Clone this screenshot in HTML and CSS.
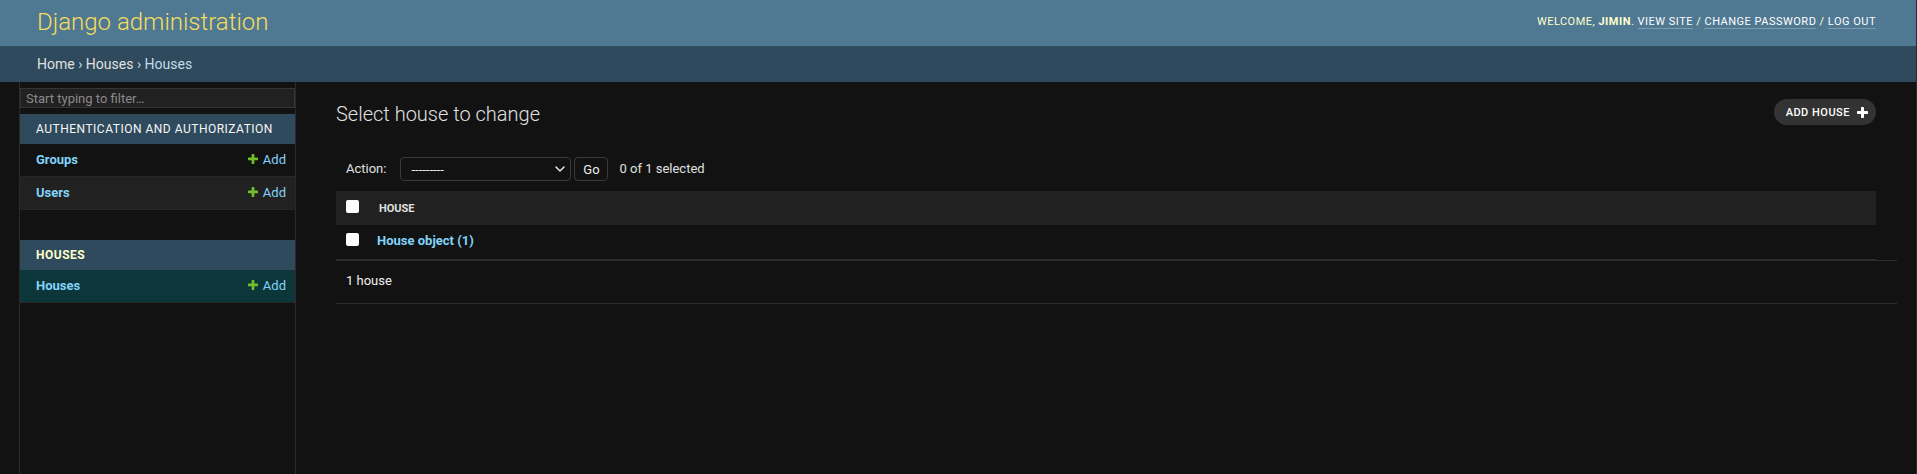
FILE: index.html
```html
<!DOCTYPE html>
<html lang="en">
<head>
<meta charset="utf-8">
<title>Select house to change | Django site admin</title>
<link rel="stylesheet" href="styles.css">
</head>
<body>
<div class="container">
  <header class="header">
    <div class="branding">
      <h1 class="site-name"><a href="#">Django administration</a></h1>
    </div>
    <div class="user-tools">
      Welcome, <strong>jimin</strong>. <a href="#">View site</a> / <a href="#">Change password</a> / <a href="#">Log out</a>
    </div>
  </header>
  <nav class="breadcrumbs">
    <a href="#">Home</a>&nbsp;›&nbsp;<a href="#">Houses</a>&nbsp;›&nbsp;Houses
  </nav>
  <div class="main">
    <div class="toggle-nav-sidebar"></div>
    <nav class="nav-sidebar">
      <input class="nav-filter" type="search" placeholder="Start typing to filter…">
      <div class="module">
        <div class="caption">Authentication and Authorization</div>
        <div class="model-row">
          <a class="model-link" href="#">Groups</a>
          <a class="addlink" href="#"><svg class="plus" width="10" height="10" viewBox="192 192 1408 1408"><path fill="#70bf2b" d="M1600 796v192q0 40-28 68t-68 28h-416v416q0 40-28 68t-68 28h-192q-40 0-68-28t-28-68v-416h-416q-40 0-68-28t-28-68v-192q0-40 28-68t68-28h416v-416q0-40 28-68t68-28h192q40 0 68 28t28 68v416h416q40 0 68 28t28 68z"/></svg>Add</a>
        </div>
        <div class="model-row even">
          <a class="model-link" href="#">Users</a>
          <a class="addlink" href="#"><svg class="plus" width="10" height="10" viewBox="192 192 1408 1408"><path fill="#70bf2b" d="M1600 796v192q0 40-28 68t-68 28h-416v416q0 40-28 68t-68 28h-192q-40 0-68-28t-28-68v-416h-416q-40 0-68-28t-28-68v-192q0-40 28-68t68-28h416v-416q0-40 28-68t68-28h192q40 0 68 28t28 68v416h416q40 0 68 28t28 68z"/></svg>Add</a>
        </div>
      </div>
      <div class="module">
        <div class="caption current-app">Houses</div>
        <div class="model-row current-model">
          <a class="model-link" href="#">Houses</a>
          <a class="addlink" href="#"><svg class="plus" width="10" height="10" viewBox="192 192 1408 1408"><path fill="#70bf2b" d="M1600 796v192q0 40-28 68t-68 28h-416v416q0 40-28 68t-68 28h-192q-40 0-68-28t-28-68v-416h-416q-40 0-68-28t-28-68v-192q0-40 28-68t68-28h416v-416q0-40 28-68t68-28h192q40 0 68 28t28 68v416h416q40 0 68 28t28 68z"/></svg>Add</a>
        </div>
      </div>
    </nav>
    <div class="content">
      <div class="content-head">
        <h1 class="title">Select house to change</h1>
        <a class="object-tool" href="#">Add house<svg width="11" height="11" viewBox="192 192 1408 1408"><path fill="#ffffff" d="M1600 796v192q0 40-28 68t-68 28h-416v416q0 40-28 68t-68 28h-192q-40 0-68-28t-28-68v-416h-416q-40 0-68-28t-28-68v-192q0-40 28-68t68-28h416v-416q0-40 28-68t68-28h192q40 0 68 28t28 68v416h416q40 0 68 28t28 68z"/></svg></a>
      </div>
      <div class="actions">
        <span class="action-label">Action:</span>
        <div class="select">
          <span>---------</span>
          <svg width="10" height="6" viewBox="0 0 10 6"><polyline points="1,1 5,5 9,1" fill="none" stroke="#e0e0e0" stroke-width="1.6" stroke-linecap="round" stroke-linejoin="round"/></svg>
        </div>
        <button class="go-button" type="button">Go</button>
        <span class="action-counter">0 of 1 selected</span>
      </div>
      <table class="result-list">
        <thead>
          <tr>
            <th class="check-cell"><input class="checkbox" type="checkbox"></th>
            <th class="head-text">House</th>
          </tr>
        </thead>
        <tbody>
          <tr>
            <td class="check-cell"><input class="checkbox" type="checkbox"></td>
            <th class="row-text"><a href="#">House object (1)</a></th>
          </tr>
        </tbody>
      </table>
      <p class="paginator">1 house</p>
    </div>
  </div>
</div>
</body>
</html>
```
FILE: styles.css
```css
* { box-sizing: border-box; }

html, body {
  margin: 0;
  padding: 0;
}

body {
  background: #121212;
  color: #eeeeee;
  font-family: Roboto, "Liberation Sans", Arial, sans-serif;
  font-size: 14px;
  height: 474px;
  overflow: hidden;
  border-right: 1px solid #2b2b2b;
}

a { text-decoration: none; }

.container {
  display: flex;
  flex-direction: column;
  height: 100%;
}

/* Header */
.header {
  flex: 0 0 46px;
  background: #4f7893;
  display: flex;
  align-items: center;
  justify-content: space-between;
  padding: 0 40px 2px 37px;
}

.site-name {
  margin: 0;
  font-size: 24px;
  font-weight: 300;
  line-height: 24px;
}

.site-name a { color: #f5dd5d; }

.user-tools {
  font-size: 11px;
  line-height: 14px;
  letter-spacing: 0.5px;
  text-transform: uppercase;
  color: #ffffcc;
}

.user-tools strong { font-weight: 700; }

.user-tools a {
  color: #ffffff;
  border-bottom: 1px solid rgba(255, 255, 255, 0.25);
}

/* Breadcrumbs */
.breadcrumbs {
  flex: 0 0 36px;
  background: #2e4a5c;
  display: flex;
  align-items: center;
  padding: 0 37px;
  font-size: 14px;
  line-height: 17px;
  color: #c4dce8;
}

.breadcrumbs a { color: #e0e0e0; }

/* Main */
.main {
  flex: 1;
  display: flex;
  min-height: 0;
}

.toggle-nav-sidebar {
  flex: 0 0 20px;
  border-right: 1px solid #2a2a2a;
  background: #121212;
}

.nav-sidebar {
  flex: 0 0 276px;
  border-right: 1px solid #2a2a2a;
  border-top: 1px solid transparent;
  display: flex;
  flex-direction: column;
}

.nav-filter {
  display: block;
  width: 100%;
  height: 20px;
  margin: 5px 0 6px;
  padding: 0 5px;
  border: 1px solid #353535;
  background: #212121;
  color: #eeeeee;
  font-family: Roboto, "Liberation Sans", Arial, sans-serif;
  font-size: 13px;
  outline: none;
  -webkit-appearance: none;
  appearance: none;
}

.nav-filter::placeholder { color: #8a8a8a; }

.module { margin-bottom: 30px; }

.caption {
  height: 30px;
  display: flex;
  align-items: center;
  padding-left: 16px;
  background: #2e4a5c;
  color: #f7f7f7;
  font-size: 12px;
  letter-spacing: 0.5px;
  text-transform: uppercase;
}

.caption.current-app {
  color: #ffffcc;
  font-weight: 700;
}

.model-row {
  height: 33px;
  display: flex;
  align-items: center;
  justify-content: space-between;
  padding: 0 9px 2px 16px;
  border-bottom: 1px solid #272727;
  font-size: 13px;
}

.model-row.even { background: #212121; }

.model-row.current-model { background: #0d363b; }

.model-link {
  color: #81d4fa;
  font-weight: 700;
}

.addlink {
  color: #81d4fa;
  display: flex;
  align-items: center;
  gap: 5px;
}

/* Content */
.content {
  flex: 1;
  padding: 20px 40px;
  min-width: 0;
}

.content-head {
  display: flex;
  justify-content: space-between;
  align-items: flex-start;
  margin-bottom: 21px;
}

.title {
  margin: 0;
  font-size: 20px;
  line-height: 24px;
  font-weight: 300;
  color: #e0e0e0;
}

.object-tool {
  margin-top: -3px;
  height: 26px;
  display: flex;
  align-items: center;
  gap: 7px;
  padding: 0 8px 0 12px;
  border-radius: 15px;
  background: #333333;
  color: #ffffff;
  font-size: 11px;
  font-weight: 500;
  letter-spacing: 0.5px;
  text-transform: uppercase;
}

.actions {
  height: 44px;
  padding: 10px;
  display: flex;
  align-items: center;
  font-size: 13px;
  color: #e0e0e0;
}

.action-label {
  margin-right: 14px;
  margin-bottom: 2px;
}

.select {
  width: 171px;
  height: 24px;
  border: 1px solid #3a3a3a;
  border-radius: 4px;
  background: #121212;
  display: flex;
  align-items: center;
  justify-content: space-between;
  padding: 0 5px 0 10px;
  color: #eeeeee;
  font-size: 13px;
}

.go-button {
  margin-left: 3px;
  width: 34px;
  height: 24px;
  padding: 0;
  border: 1px solid #3a3a3a;
  border-radius: 4px;
  background: #121212;
  color: #eeeeee;
  font-family: Roboto, "Liberation Sans", Arial, sans-serif;
  font-size: 13px;
}

.action-counter {
  margin-left: 11px;
  margin-bottom: 2px;
}

.result-list {
  width: 100%;
  border-collapse: collapse;
  border-spacing: 0;
}

.result-list thead tr {
  height: 34px;
  background: #212121;
}

.result-list tbody tr {
  height: 34px;
  border-bottom: 1px solid #2c2c2c;
}

.check-cell {
  width: 33px;
  padding: 9px 10px 0;
  vertical-align: top;
  text-align: left;
}

.result-list tbody .check-cell { padding-top: 8px; }

.checkbox {
  display: block;
  margin: 0;
  width: 13px;
  height: 13px;
  border-radius: 2px;
  background: #ffffff;
  border: none;
  -webkit-appearance: none;
  appearance: none;
}

.head-text {
  padding: 0 10px;
  text-align: left;
  vertical-align: middle;
  font-size: 11px;
  font-weight: 700;
  text-transform: uppercase;
  color: #e0e0e0;
}

.row-text {
  padding: 0 8px 2px;
  text-align: left;
  vertical-align: middle;
  font-size: 13px;
  font-weight: 700;
}

.row-text a { color: #81d4fa; }

.paginator {
  margin: 0 -21px 0 0;
  height: 44px;
  padding: 0 10px 2px;
  display: flex;
  align-items: center;
  border-top: 1px solid #2c2c2c;
  border-bottom: 1px solid #2c2c2c;
  font-size: 13px;
  color: #eeeeee;
}
```
